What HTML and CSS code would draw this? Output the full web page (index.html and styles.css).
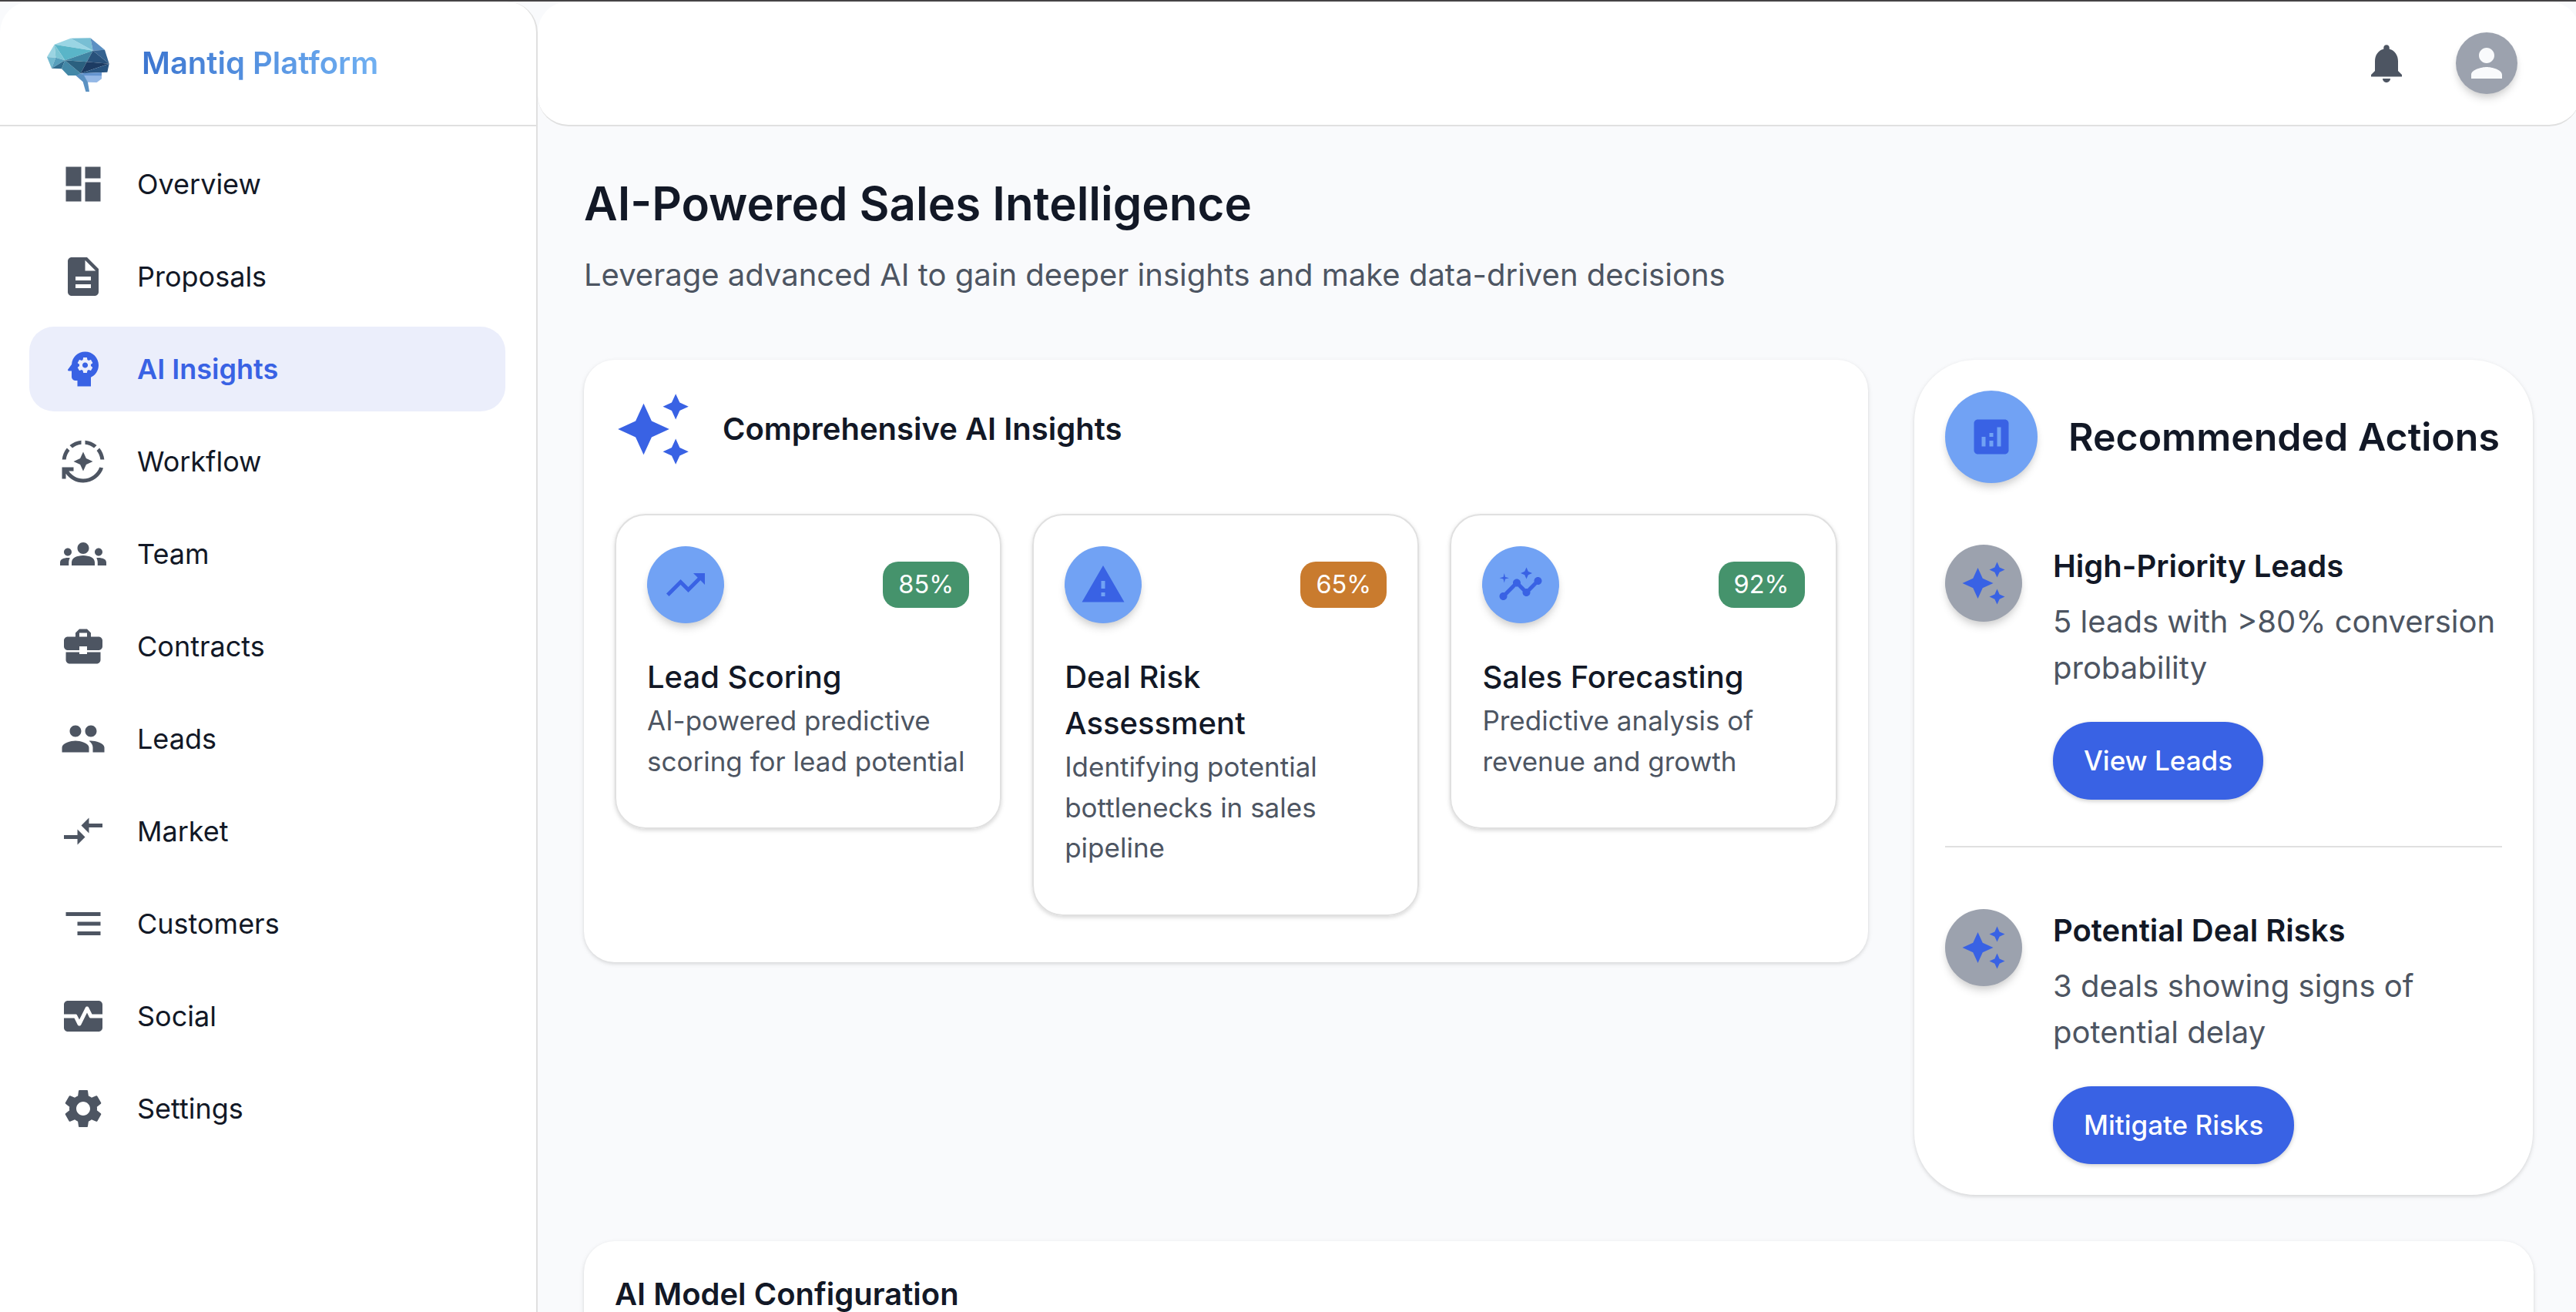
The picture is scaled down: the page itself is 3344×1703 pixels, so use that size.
FILE: index.html
```html
<!DOCTYPE html>
<html lang="en">
<head>
<meta charset="utf-8">
<title>Mantiq Platform</title>
<link rel="stylesheet" href="styles.css">
</head>
<body>
<svg class="sprite" aria-hidden="true">
  <symbol id="sparkle" viewBox="0 0 24 24"><path d="M19 9l1.25-2.75L23 5l-2.75-1.25L19 1l-1.25 2.75L15 5l2.75 1.25L19 9zm-7.5.5L9 4 6.5 9.5 1 12l5.5 2.5L9 20l2.5-5.5L17 12l-5.5-2.5zM19 15l-1.25 2.75L15 19l2.75 1.25L19 23l1.25-2.75L23 19l-2.75-1.25L19 15z"/></symbol>
</svg>
<div class="app">
  <aside class="sidebar">
    <div class="brand">
      <svg class="logo" viewBox="0 0 390 330">
        <path fill="#9ad5e4" d="M92 83 155 59 242 107z"/>
        <path fill="#78bfd4" d="M155 59 232 58 242 107z"/>
        <path fill="#5b90c3" d="M232 58 288 104 242 107z"/>
        <path fill="#5ab5c8" d="M92 83 242 107 133 145z"/>
        <path fill="#9bd4e2" d="M63 132 92 83 97 134z"/>
        <path fill="#7cc5d4" d="M92 83 133 145 97 134z"/>
        <path fill="#72b9cf" d="M63 132 97 134 81 176z"/>
        <path fill="#569fbc" d="M97 134 133 145 81 176z"/>
        <path fill="#306c8e" d="M133 145 81 176 120 178z"/>
        <path fill="#4388a7" d="M133 145 120 178 145 204 180 204 194 196z"/>
        <path fill="#4085a3" d="M133 145 242 107 218 151z"/>
        <path fill="#2b607f" d="M133 145 218 151 194 196z"/>
        <path fill="#35628f" d="M242 107 288 104 305 158z"/>
        <path fill="#28517b" d="M242 107 305 158 218 151z"/>
        <path fill="#1c3b62" d="M218 151 305 158 194 196z"/>
        <path fill="#285480" d="M305 158 298 191 194 196z"/>
        <path fill="#94b8e6" d="M205 204 276 204 276 217 257 231 221 230z"/>
        <path fill="#6494cf" d="M194 196 276 192 276 205 205 204z"/>
        <path fill="#5a91c2" d="M175 204 194 196 207 203 222 230 228 267 214 267 203 229z"/>
      </svg>
      <span class="brand-name">Mantiq Platform</span>
    </div>
    <nav class="nav">
      <a class="nav-item"><svg class="icon" viewBox="0 0 24 24"><path d="M3 13h8V3H3v10zm0 8h8v-6H3v6zm10 0h8V11h-8v10zm0-18v6h8V3h-8z"/></svg>Overview</a>
      <a class="nav-item"><svg class="icon" viewBox="0 0 24 24"><path d="M14 2H6c-1.1 0-1.99.9-1.99 2L4 20c0 1.1.89 2 1.99 2H18c1.1 0 2-.9 2-2V8l-6-6zm2 16H8v-2h8v2zm0-4H8v-2h8v2zm-3-5V3.5L18.5 9H13z"/></svg>Proposals</a>
      <a class="nav-item active"><svg class="icon" viewBox="0 0 24 24"><path d="M13 8.57c-.79 0-1.43.64-1.43 1.43s.64 1.43 1.43 1.43 1.43-.64 1.43-1.43-.64-1.43-1.43-1.43z"/><path d="M13 3C9.25 3 6.2 5.94 6.02 9.64L4.1 12.2c-.25.33-.01.8.4.8H6v3c0 1.1.9 2 2 2h1v3h7v-4.68c2.36-1.12 4-3.53 4-6.32 0-3.87-3.13-7-7-7zm3 7c0 .13-.01.26-.02.39l.83.66c.08.06.1.16.05.25l-.8 1.39c-.05.09-.16.12-.24.09l-.99-.4c-.21.16-.43.29-.67.39L14 13.83c-.01.1-.1.17-.2.17h-1.6c-.1 0-.18-.07-.2-.17l-.15-1.06c-.25-.1-.47-.23-.68-.39l-.99.4c-.09.03-.2 0-.25-.09l-.8-1.39c-.05-.08-.03-.19.05-.25l.84-.66c-.01-.13-.02-.26-.02-.39s.02-.27.04-.39l-.85-.66c-.08-.06-.1-.16-.05-.26l.8-1.38c.05-.09.15-.12.24-.09l1 .4c.2-.15.43-.29.67-.39l.15-1.06c.02-.1.1-.17.2-.17h1.6c.1 0 .18.07.2.17l.15 1.06c.24.1.46.23.67.39l1-.4c.09-.03.2 0 .24.09l.8 1.38c.05.09.03.2-.05.26l-.85.66c.03.12.04.25.04.39z"/></svg>AI Insights</a>
      <a class="nav-item"><svg class="icon" viewBox="0 0 24 24"><path d="M19.03 3.56c-1.67-1.39-3.74-2.3-6.03-2.51v2.01c1.73.19 3.31.88 4.61 1.92l1.42-1.42zM11 3.06V1.05c-2.29.2-4.36 1.12-6.03 2.51l1.42 1.42C7.69 3.94 9.27 3.25 11 3.06zM4.98 6.39 3.56 4.97C2.17 6.64 1.26 8.71 1.05 11h2.01c.19-1.73.88-3.31 1.92-4.61zM20.94 11h2.01c-.21-2.29-1.12-4.36-2.51-6.03l-1.42 1.42c1.04 1.3 1.73 2.88 1.92 4.61zM7 12l3.44 1.56L12 17l1.56-3.44L17 12l-3.44-1.56L12 7l-1.56 3.44z"/><path d="M12 21c-3.11 0-5.85-1.59-7.46-4H7v-2H1v6h2v-2.7c1.99 2.84 5.27 4.7 9 4.7 4.87 0 9-3.17 10.44-7.56l-1.96-.45C19.25 18.48 15.92 21 12 21z"/></svg>Workflow</a>
      <a class="nav-item"><svg class="icon" viewBox="0 0 24 24"><path d="M12 12.75c1.63 0 3.07.39 4.24.9 1.08.48 1.76 1.56 1.76 2.73V18H6v-1.61c0-1.18.68-2.26 1.76-2.73 1.17-.52 2.61-.91 4.24-.91zM4 13c1.1 0 2-.9 2-2s-.9-2-2-2-2 .9-2 2 .9 2 2 2zm1.13 1.1c-.37-.06-.74-.1-1.13-.1-.99 0-1.93.21-2.78.58C.48 14.9 0 15.62 0 16.43V18h4.5v-1.61c0-.83.23-1.61.63-2.29zM20 13c1.1 0 2-.9 2-2s-.9-2-2-2-2 .9-2 2 .9 2 2 2zm4 3.43c0-.81-.48-1.53-1.22-1.85-.85-.37-1.79-.58-2.78-.58-.39 0-.76.04-1.13.1.4.68.63 1.46.63 2.29V18H24v-1.57zM12 6c1.66 0 3 1.34 3 3s-1.34 3-3 3-3-1.34-3-3 1.34-3 3-3z"/></svg>Team</a>
      <a class="nav-item"><svg class="icon" viewBox="0 0 24 24"><path d="M10 16v-1H3.01L3 19c0 1.11.89 2 2 2h14c1.11 0 2-.89 2-2v-4h-7v1h-4zm10-9h-4.01V5l-2-2h-4l-2 2v2H4c-1.1 0-2 .9-2 2v3c0 1.11.89 2 2 2h6v-2h4v2h6c1.1 0 2-.9 2-2V9c0-1.1-.9-2-2-2zm-6 0h-4V5h4v2z"/></svg>Contracts</a>
      <a class="nav-item"><svg class="icon" viewBox="0 0 24 24"><path d="M16 11c1.66 0 2.99-1.34 2.99-3S17.66 5 16 5c-1.66 0-3 1.34-3 3s1.34 3 3 3zm-8 0c1.66 0 2.99-1.34 2.99-3S9.66 5 8 5C6.34 5 5 6.34 5 8s1.34 3 3 3zm0 2c-2.33 0-7 1.17-7 3.5V19h14v-2.5c0-2.33-4.67-3.5-7-3.5zm8 0c-.29 0-.62.02-.97.05 1.16.84 1.97 1.97 1.97 3.45V19h6v-2.5c0-2.33-4.67-3.5-7-3.5z"/></svg>Leads</a>
      <a class="nav-item"><svg class="icon" viewBox="0 0 24 24"><path d="M9.01 14H2v2h7.01v3L13 15l-3.99-4v3zm5.98-1v-3H22V8h-7.01V5L11 9l3.99 4z"/></svg>Market</a>
      <a class="nav-item"><svg class="icon" viewBox="0 0 24 24"><path d="M3 6h18v2H3zM9 11h12v2H9zM9 16h12v2H9z"/></svg>Customers</a>
      <a class="nav-item"><svg class="icon" viewBox="0 0 24 24"><path d="M15.11 12.45 14 10.24l-3.11 6.21c-.16.34-.51.55-.89.55s-.73-.21-.89-.55L7.38 13H2v5c0 1.1.9 2 2 2h16c1.1 0 2-.9 2-2v-5h-6c-.38 0-.73-.21-.89-.55z"/><path d="M20 4H4c-1.1 0-2 .9-2 2v5h6c.38 0 .73.21.89.55L10 13.76l3.11-6.21c.34-.68 1.45-.68 1.79 0L16.62 11H22V6c0-1.1-.9-2-2-2z"/></svg>Social</a>
      <a class="nav-item"><svg class="icon" viewBox="0 0 24 24"><path d="M19.14 12.94c.04-.3.06-.61.06-.94 0-.32-.02-.64-.07-.94l2.03-1.58c.18-.14.23-.41.12-.61l-1.92-3.32c-.12-.22-.37-.29-.59-.22l-2.39.96c-.5-.38-1.03-.7-1.62-.94l-.36-2.54c-.04-.24-.24-.41-.48-.41h-3.84c-.24 0-.43.17-.47.41l-.36 2.54c-.59.24-1.13.57-1.62.94l-2.39-.96c-.22-.08-.47 0-.59.22L2.74 8.87c-.12.21-.08.47.12.61l2.03 1.58c-.05.3-.09.63-.09.94s.02.64.07.94l-2.03 1.58c-.18.14-.23.41-.12.61l1.92 3.32c.12.22.37.29.59.22l2.39-.96c.5.38 1.03.7 1.62.94l.36 2.54c.05.24.24.41.48.41h3.84c.24 0 .44-.17.47-.41l.36-2.54c.59-.24 1.13-.56 1.62-.94l2.39.96c.22.08.47 0 .59-.22l1.92-3.32c.12-.22.07-.47-.12-.61l-2.01-1.58zM12 15.6c-1.98 0-3.6-1.62-3.6-3.6s1.62-3.6 3.6-3.6 3.6 1.62 3.6 3.6-1.62 3.6-3.6 3.6z"/></svg>Settings</a>
    </nav>
  </aside>

  <div class="content">
    <header class="topbar">
      <svg class="icon" viewBox="0 0 24 24"><path d="M12 22c1.1 0 2-.9 2-2h-4c0 1.1.89 2 2 2zm6-6v-5c0-3.07-1.64-5.64-4.5-6.32V4c0-.83-.67-1.5-1.5-1.5s-1.5.67-1.5 1.5v.68C7.63 5.36 6 7.92 6 11v5l-2 2v1h16v-1l-2-2z"/></svg>
      <span class="avatar user"><svg class="icon" viewBox="0 0 24 24"><path d="M12 12c2.21 0 4-1.79 4-4s-1.79-4-4-4-4 1.79-4 4 1.79 4 4 4zm0 2c-2.67 0-8 1.34-8 4v2h16v-2c0-2.66-5.33-4-8-4z"/></svg></span>
    </header>

    <main class="main">
      <h1 class="page-title">AI-Powered Sales Intelligence</h1>
      <p class="page-subtitle">Leverage advanced AI to gain deeper insights and make data-driven decisions</p>

      <div class="grid">
        <section class="card insights">
          <div class="insights-head">
            <svg class="icon icon-large"><use href="#sparkle"/></svg>
            <h2 class="heading">Comprehensive AI Insights</h2>
          </div>
          <div class="metrics">
            <article class="metric">
              <div class="metric-top">
                <span class="avatar blue"><svg class="icon" viewBox="0 0 24 24"><path d="m16 6 2.29 2.29-4.88 4.88-4-4L2 16.59 3.41 18l6-6 4 4 6.3-6.29L22 12V6z"/></svg></span>
                <span class="chip good">85%</span>
              </div>
              <h3 class="metric-title">Lead Scoring</h3>
              <p class="metric-text">AI-powered predictive scoring for lead potential</p>
            </article>
            <article class="metric">
              <div class="metric-top">
                <span class="avatar blue"><svg class="icon" viewBox="0 0 24 24"><path d="M1 21h22L12 2 1 21zm12-3h-2v-2h2v2zm0-4h-2v-4h2v4z"/></svg></span>
                <span class="chip warn">65%</span>
              </div>
              <h3 class="metric-title">Deal Risk Assessment</h3>
              <p class="metric-text">Identifying potential bottlenecks in sales pipeline</p>
            </article>
            <article class="metric">
              <div class="metric-top">
                <span class="avatar blue"><svg class="icon" viewBox="0 0 24 24"><path d="M21 8c-1.45 0-2.26 1.44-1.93 2.51l-3.55 3.56c-.3-.09-.74-.09-1.04 0l-2.55-2.55C12.27 10.45 11.46 9 10 9c-1.45 0-2.27 1.44-1.93 2.52l-4.56 4.55C2.44 15.74 1 16.55 1 18c0 1.1.9 2 2 2 1.45 0 2.26-1.44 1.93-2.51l4.55-4.56c.3.09.74.09 1.04 0l2.55 2.55C12.73 16.55 13.54 18 15 18c1.45 0 2.27-1.44 1.93-2.52l3.56-3.55c1.07.33 2.51-.48 2.51-1.93 0-1.1-.9-2-2-2z"/><path d="m15 9 .94-2.07L18 6l-2.06-.93L15 3l-.92 2.07L12 6l2.08.93zM3.5 11 4 9l2-.5L4 8l-.5-2L3 8l-2 .5L3 9z"/></svg></span>
                <span class="chip good">92%</span>
              </div>
              <h3 class="metric-title">Sales Forecasting</h3>
              <p class="metric-text">Predictive analysis of revenue and growth</p>
            </article>
          </div>
        </section>

        <section class="card actions">
          <div class="actions-head">
            <span class="avatar blue big"><svg class="icon" viewBox="0 0 24 24"><path d="M19 3H5c-1.1 0-2 .9-2 2v14c0 1.1.9 2 2 2h14c1.1 0 2-.9 2-2V5c0-1.1-.9-2-2-2zM9 17H7v-5h2v5zm4 0h-2v-3h2v3zm0-5h-2v-2h2v2zm4 5h-2V7h2v10z"/></svg></span>
            <h2 class="actions-title">Recommended Actions</h2>
          </div>
          <div class="action">
            <span class="avatar grey"><svg class="icon"><use href="#sparkle"/></svg></span>
            <div class="action-body">
              <h3 class="heading">High-Priority Leads</h3>
              <p class="action-text">5 leads with &gt;80% conversion probability</p>
              <button class="button">View Leads</button>
            </div>
          </div>
          <hr class="divider">
          <div class="action">
            <span class="avatar grey"><svg class="icon"><use href="#sparkle"/></svg></span>
            <div class="action-body">
              <h3 class="heading">Potential Deal Risks</h3>
              <p class="action-text">3 deals showing signs of potential delay</p>
              <button class="button">Mitigate Risks</button>
            </div>
          </div>
        </section>

        <section class="card config">
          <h2 class="heading">AI Model Configuration</h2>
        </section>
      </div>
    </main>
  </div>
</div>
</body>
</html>
```
FILE: styles.css
```css
* { box-sizing: border-box; }

html, body { height: 100%; }

body {
  margin: 0;
  overflow: hidden;
  background: #f9fafc;
  color: #121826;
  font-family: Inter, "Liberation Sans", sans-serif;
  font-size: 40px;
  line-height: 60px;
}

h1, h2, h3, p { margin: 0; }

.sprite { display: none; }

.app {
  display: flex;
  height: 1703px;
  overflow: hidden;
  border-top: 2px solid #454345;
}

.icon {
  flex: none;
  width: 60px;
  height: 60px;
  fill: currentColor;
}

.icon-large { width: 100px; height: 100px; }

/* Sidebar */
.sidebar {
  flex: none;
  width: 698px;
  background: #fff;
  border-right: 2px solid #e0e0e0;
  border-radius: 40px 40px 0 0;
}

.brand {
  display: flex;
  align-items: center;
  height: 162px;
  padding-left: 40px;
  border-bottom: 2px solid #e0e0e0;
}

.logo {
  flex: none;
  width: 130px;
  height: 110px;
  margin-top: 6px;
}

.brand-name {
  margin-left: 14px;
  font-weight: 600;
  background: linear-gradient(90deg, #3d76d0, #70b0f2);
  -webkit-background-clip: text;
  background-clip: text;
  color: transparent;
}

.nav {
  display: flex;
  flex-direction: column;
  gap: 10px;
  padding: 20px 40px 0 38px;
}

.nav-item {
  display: flex;
  align-items: center;
  gap: 40px;
  height: 110px;
  padding-left: 40px;
  border-radius: 32px;
  font-size: 36px;
}

.nav-item .icon { color: #4d5562; }

.nav-item.active {
  background: #ebeefb;
  color: #3962e4;
  font-weight: 600;
}

.nav-item.active .icon { color: #3962e4; }

/* Content column */
.content {
  flex: none;
  width: 2651px;
}

.topbar {
  display: flex;
  align-items: center;
  justify-content: flex-end;
  gap: 60px;
  height: 162px;
  padding-right: 81px;
  background: #fff;
  border-bottom: 2px solid #e0e0e0;
  border-radius: 40px;
  color: #4d5562;
}

.avatar {
  flex: none;
  display: flex;
  align-items: center;
  justify-content: center;
  width: 100px;
  height: 100px;
  border-radius: 50%;
  box-shadow: 0 8px 12px -2px rgba(0, 0, 0, .14), 0 4px 8px -2px rgba(0, 0, 0, .08);
}

.avatar.user {
  width: 80px;
  height: 80px;
  background: #9ca2ae;
  color: #f9fafc;
}

.avatar.big { width: 120px; height: 120px; }
.avatar.blue { background: #71a2f4; color: #3962e4; }
.avatar.grey { background: #9ca2ae; color: #3962e4; }

.main { padding: 60px; }

.page-title {
  font-size: 60px;
  line-height: 80px;
  font-weight: 600;
}

.page-subtitle {
  margin-top: 23px;
  color: #4d5562;
}

.grid {
  display: grid;
  grid-template-columns: 1667px 803px;
  gap: 60px;
  align-items: start;
  margin-top: 80px;
}

.card {
  padding: 40px;
  background: #fff;
  border-radius: 40px;
  box-shadow: 0 2px 6px rgba(0, 0, 0, .1), 0 2px 4px rgba(0, 0, 0, .06);
}

.heading {
  font-size: 40px;
  line-height: 60px;
  font-weight: 600;
}

/* Insights */
.insights { padding-bottom: 60px; }

.insights-head {
  display: flex;
  align-items: center;
  gap: 40px;
  margin-bottom: 60px;
}

.insights-head .icon { color: #3962e4; }

.metrics {
  display: grid;
  grid-template-columns: repeat(3, 502.2px);
  gap: 40px;
  align-items: start;
}

.metric {
  padding: 40px 40px 60px;
  border: 2px solid #e0e0e0;
  border-radius: 40px;
  box-shadow: 0 2px 6px rgba(0, 0, 0, .1), 0 2px 4px rgba(0, 0, 0, .06);
}

.metric-top {
  display: flex;
  align-items: center;
  justify-content: space-between;
  margin-bottom: 40px;
}

.chip {
  width: 112px;
  height: 60px;
  border-radius: 20px;
  color: #fff;
  font-size: 32.5px;
  font-weight: 400;
  text-align: center;
}

.chip.good { background: #45936c; }
.chip.warn { background: #c97b2e; }

.metric-title {
  font-size: 40px;
  font-weight: 500;
}

.metric-text {
  color: #4d5562;
  font-size: 35px;
  line-height: 52.5px;
}

/* Recommended actions */
.actions { border-radius: 80px; }

.actions-head {
  display: flex;
  align-items: center;
  gap: 40px;
}

.actions-title {
  font-size: 50px;
  font-weight: 600;
  white-space: nowrap;
}

.action {
  display: flex;
  align-items: flex-start;
  gap: 40px;
  margin-top: 78px;
}

.action .avatar { margin-top: 2px; }

.action-text {
  margin-top: 12px;
  color: #4d5562;
}

.button {
  display: block;
  height: 101px;
  margin-top: 40px;
  padding: 0 40px 1px;
  border: 0;
  border-radius: 50px;
  background: #3962e4;
  color: #fff;
  font: 500 35px/60px Inter, "Liberation Sans", sans-serif;
  box-shadow: 0 2px 6px rgba(0, 0, 0, .12), 0 2px 4px rgba(0, 0, 0, .08);
}

.divider {
  height: 2px;
  margin: 60px 0 0;
  border: 0;
  background: #e0e0e0;
}

.config {
  grid-column: 1 / -1;
  height: 180px;
  margin-right: -1px;
}

.config .heading { line-height: 58px; }
```
